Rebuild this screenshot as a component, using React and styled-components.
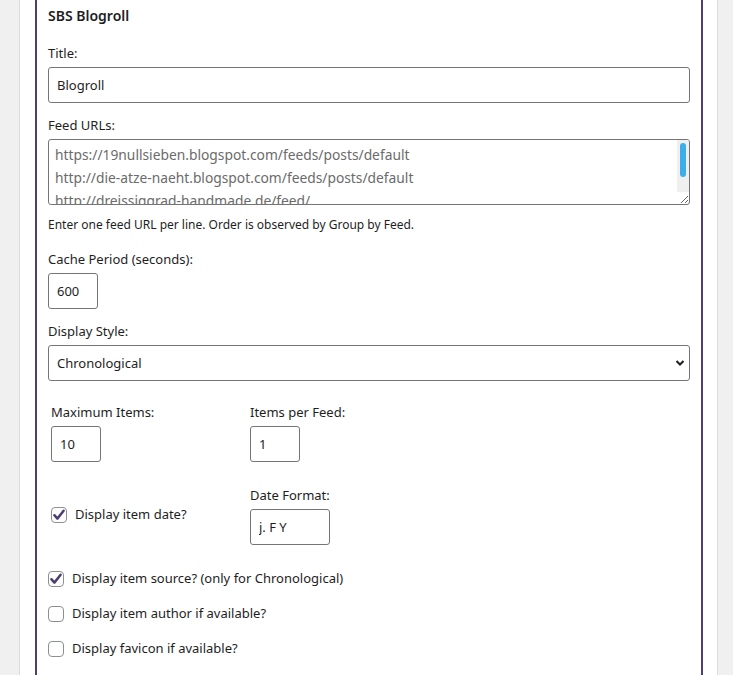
import React from 'react';
import styled, { createGlobalStyle } from 'styled-components';

const GlobalStyle = createGlobalStyle`
  body {
    margin: 0;
    background: #f0f0f1;
    font-family: "Noto Sans", "Open Sans", sans-serif;
    color: #1e1e1e;
  }
`;

const Page = styled.div`
  margin: 0 15px 0 19px;
  min-height: 675px;
  background: #fff;
  border-left: 1px solid #dcdcde;
  border-right: 1px solid #dcdcde;
  padding: 0 14px 0 15px;
`;

const Widget = styled.div`
  min-height: 675px;
  box-sizing: border-box;
  border-left: 2px solid #4e3f6f;
  border-right: 2px solid #4e3f6f;
  padding: 7px 11px 30px;
`;

const Heading = styled.h3`
  margin: 0 0 19px;
  font-size: 14px;
  font-weight: 600;
  line-height: 18px;
`;

const Field = styled.div`
  margin-bottom: ${props => props.gap || 13}px;
`;

const Label = styled.label`
  display: block;
  font-size: 13px;
  line-height: 18px;
  margin-bottom: 5px;
`;

const TextInput = styled.input`
  display: block;
  box-sizing: border-box;
  width: ${props => props.w || '100%'};
  height: 36px;
  margin: 0;
  padding: 0 8px;
  border: 1px solid #757575;
  border-radius: 3px;
  background: #fff;
  font-family: inherit;
  font-size: 13px;
  color: #1e1e1e;
  outline: none;
`;

const AreaWrap = styled.div`
  position: relative;
`;

const FeedArea = styled.textarea`
  display: block;
  box-sizing: border-box;
  width: 100%;
  height: 66px;
  margin: 0;
  padding: 3px 6px 10px;
  border: 1px solid #757575;
  border-radius: 3px;
  font-family: inherit;
  font-size: 13.8px;
  line-height: 23px;
  color: #6b6b6b;
  white-space: pre;
  overflow: hidden;
  resize: both;
  outline: none;
`;

const ScrollTrack = styled.div`
  position: absolute;
  top: 1px;
  right: 1px;
  bottom: 13px;
  width: 12px;
  background: #efeff0;
  border-top-right-radius: 2px;
  pointer-events: none;
`;

const ScrollThumb = styled.div`
  margin: 3px 3px 0;
  width: 6px;
  height: 34px;
  border-radius: 3px;
  background: #3daee9;
`;

const Help = styled.p`
  margin: 11px 0 16px;
  font-size: 12px;
  line-height: 18px;
`;

const SelectWrap = styled.div`
  position: relative;
`;

const Select = styled.select`
  display: block;
  box-sizing: border-box;
  width: 100%;
  height: 36px;
  margin: 0;
  padding: 0 24px 0 8px;
  appearance: none;
  border: 1px solid #757575;
  border-radius: 3px;
  background: #fff;
  font-family: inherit;
  font-size: 13px;
  color: #1e1e1e;
  outline: none;
`;

const Chevron = styled.svg`
  position: absolute;
  right: 5px;
  top: 50%;
  margin-top: -5px;
  pointer-events: none;
`;

const Grid = styled.div`
  display: grid;
  grid-template-columns: 199px 199px;
  row-gap: 18px;
  margin-top: 19px;
`;

const Cell = styled.div`
  padding: 3px;
  display: flex;
  flex-direction: column;
  justify-content: center;
`;

const CheckList = styled.div`
  display: flex;
  flex-direction: column;
  gap: 17px;
  margin-top: ${props => props.top || 0}px;
`;

const CheckRow = styled.label`
  display: flex;
  align-items: center;
  gap: 8px;
  font-size: 13px;
  line-height: 18px;
  margin-bottom: ${props => props.lift || 0}px;
`;

const Box = styled.span`
  flex: none;
  box-sizing: border-box;
  width: 16px;
  height: 16px;
  border: 1px solid #8c8f94;
  border-radius: 4px;
  background: #fff;
  display: flex;
  align-items: center;
  justify-content: center;
  position: relative;
  top: 1px;
`;

const Check = ({ checked, label, lift }) => (
  <CheckRow lift={lift}>
    <Box>
      {checked && (
        <svg width="14" height="14" viewBox="0 0 14 14">
          <path d="M2.4 7.2 L5.4 10.6 L11.6 2.8" fill="none" stroke="#4e3f6f" strokeWidth="2.5" strokeLinecap="round" strokeLinejoin="round" />
        </svg>
      )}
    </Box>
    {label}
  </CheckRow>
);

const feeds = [
  'https://19nullsieben.blogspot.com/feeds/posts/default',
  'http://die-atze-naeht.blogspot.com/feeds/posts/default',
  'http://dreissiggrad-handmade.de/feed/',
].join('\n');

export default function App() {
  return (
    <>
      <GlobalStyle />
      <Page>
        <Widget>
          <Heading>SBS Blogroll</Heading>

          <Field>
            <Label>Title:</Label>
            <TextInput defaultValue="Blogroll" />
          </Field>

          <div>
            <Label>Feed URLs:</Label>
            <AreaWrap>
              <FeedArea defaultValue={feeds} spellCheck={false} />
              <ScrollTrack>
                <ScrollThumb />
              </ScrollTrack>
            </AreaWrap>
          </div>
          <Help>Enter one feed URL per line. Order is observed by Group by Feed.</Help>

          <Field>
            <Label>Cache Period (seconds):</Label>
            <TextInput w="50px" defaultValue="600" />
          </Field>

          <div>
            <Label>Display Style:</Label>
            <SelectWrap>
              <Select defaultValue="chrono">
                <option value="chrono">Chronological</option>
                <option value="group">Group by Feed</option>
              </Select>
              <Chevron width="10" height="10" viewBox="0 0 10 10">
                <path d="M1.5 3 L5 6.5 L8.5 3" fill="none" stroke="#1e1e1e" strokeWidth="2" />
              </Chevron>
            </SelectWrap>
          </div>

          <Grid>
            <Cell>
              <Label>Maximum Items:</Label>
              <TextInput w="50px" defaultValue="10" />
            </Cell>
            <Cell>
              <Label>Items per Feed:</Label>
              <TextInput w="50px" defaultValue="1" />
            </Cell>
            <Cell>
              <Check checked label="Display item date?" lift={4} />
            </Cell>
            <Cell>
              <Label>Date Format:</Label>
              <TextInput w="80px" defaultValue="j. F Y" />
            </Cell>
          </Grid>

          <CheckList top={21}>
            <Check checked label="Display item source? (only for Chronological)" />
            <Check label="Display item author if available?" />
            <Check label="Display favicon if available?" />
          </CheckList>
        </Widget>
      </Page>
    </>
  );
}
